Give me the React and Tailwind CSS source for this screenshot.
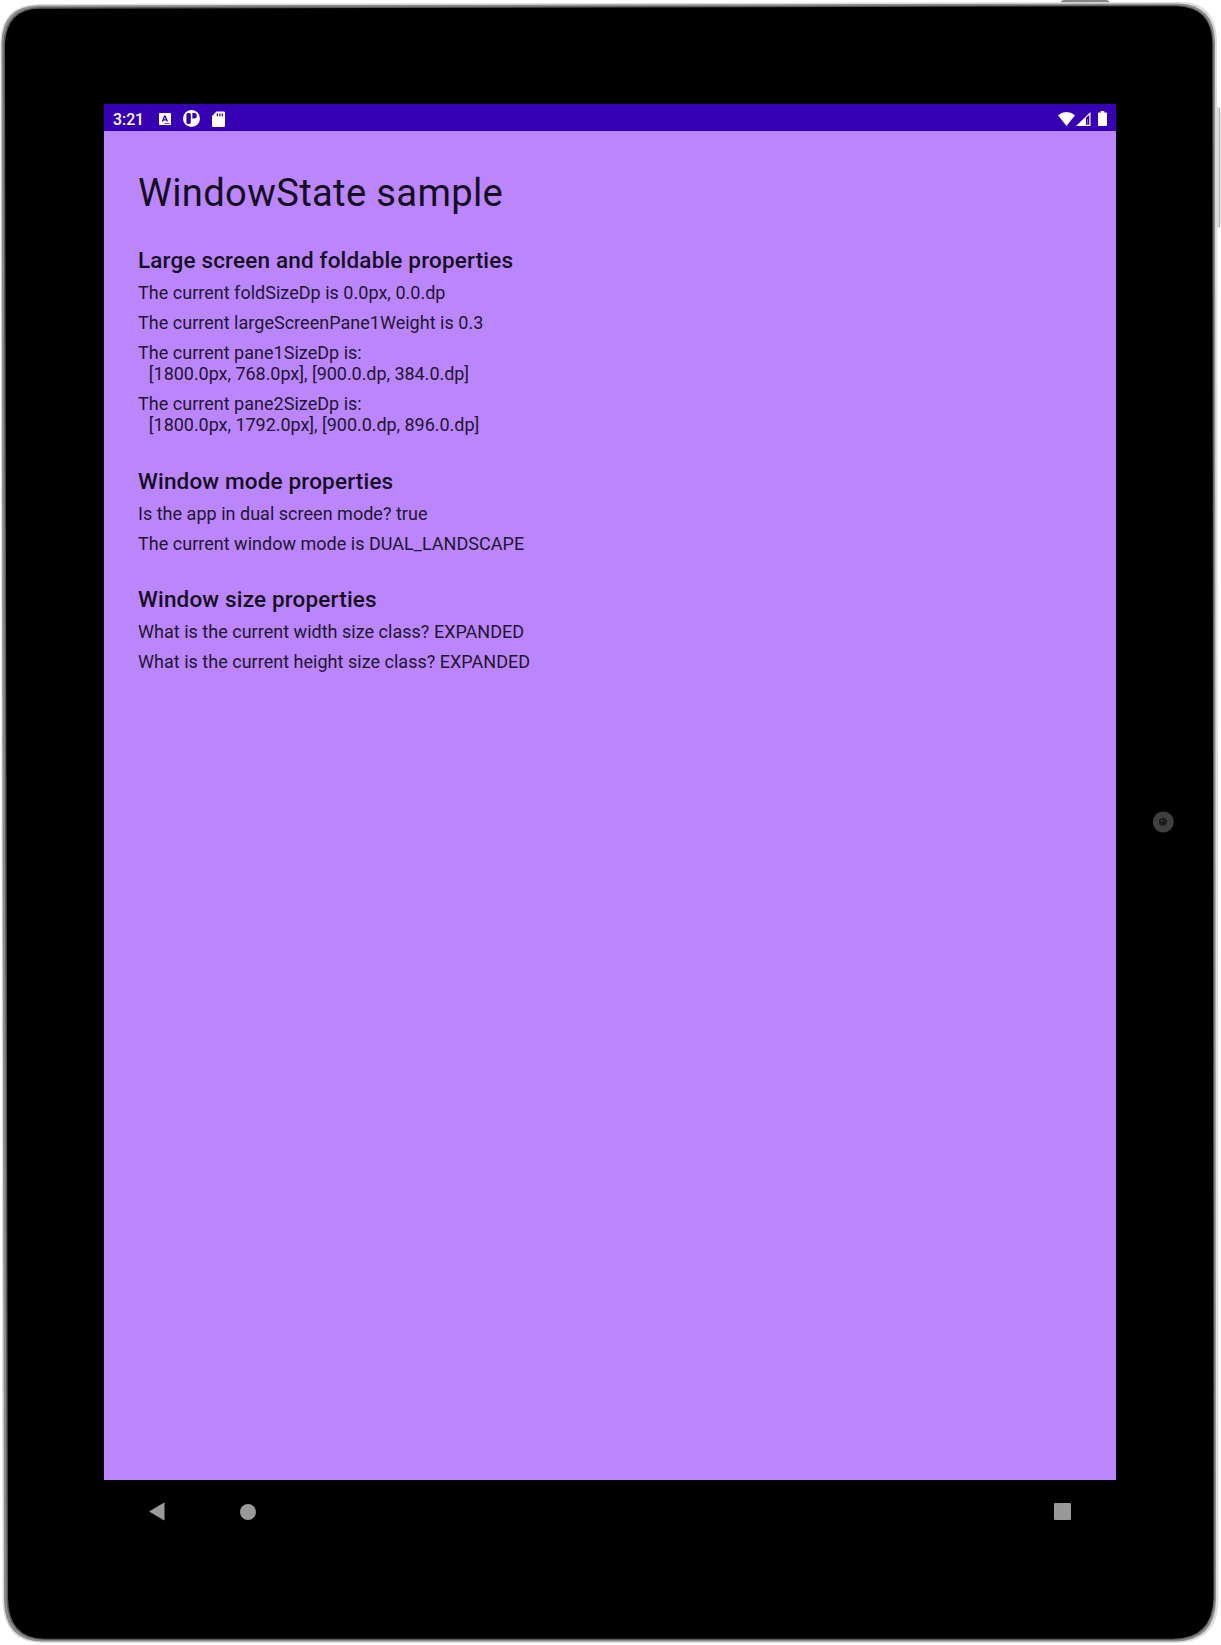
const SECTIONS = [
  {
    title: "Large screen and foldable properties",
    rows: [
      { text: "The current foldSizeDp is 0.0px, 0.0.dp" },
      { text: "The current largeScreenPane1Weight is 0.3" },
      { text: "The current pane1SizeDp is:", detail: "  [1800.0px, 768.0px], [900.0.dp, 384.0.dp]" },
      { text: "The current pane2SizeDp is:", detail: "  [1800.0px, 1792.0px], [900.0.dp, 896.0.dp]" },
    ],
  },
  {
    title: "Window mode properties",
    rows: [
      { text: "Is the app in dual screen mode? true" },
      { text: "The current window mode is DUAL_LANDSCAPE" },
    ],
  },
  {
    title: "Window size properties",
    rows: [
      { text: "What is the current width size class? EXPANDED" },
      { text: "What is the current height size class? EXPANDED" },
    ],
  },
];

/* Metal rim, side buttons and camera of the tablet. */
function TabletBody() {
  return (
    <svg className="absolute inset-0" width="1221" height="1645" viewBox="0 0 1221 1645" fill="none" aria-hidden="true">
      <path d="M1061 3V1.5Q1062 0 1064 0H1106Q1109 0 1110 3Z" fill="#858585" />
      <path d="M1217 107H1219Q1220.5 108 1220.5 110V226Q1220 228 1217 228.500Z" fill="#dcdcdc" />
      <path d="M1219.500 108V227" stroke="#b4b4b4" />
      <path d="M38 4L600 3L1182 2Q1216 3 1217 40L1218 820L1218.500 1600Q1218 1643 1175 1643H42Q3 1643 2.500 1600L1.500 820L.5 42Q1 5 38 4Z" fill="#dedede" />
      <path d="M38 5.500L600 4.500L1178 3.500Q1214.500 4.500 1215 42L1215.500 820L1216 1600Q1215 1641 1175 1641.500H42Q4.500 1641 4 1600L2.500 820L1.500 42Q3 6 38 5.500Z" fill="#8c8c8c" />
      <path d="M40 7.200L600 6.300L1176 5Q1212.500 6 1213.500 43L1214 820L1214.500 1598Q1213 1640 1173 1640H44Q7 1639 6.500 1598L5 820L3.500 44Q5 8 40 7.200Z" fill="#5a5a5a" />
      <path d="M40 8.800L600 7.500L1176 6.200Q1211.500 7 1212.300 43L1213 820L1213.500 1598Q1212 1638.500 1173 1638.800H44Q8.500 1638 8 1598L6.500 820L5 44Q7 9 40 8.800Z" fill="#000" />
      <circle cx="1163.300" cy="822" r="10.500" fill="#3f3f3f" />
      <circle cx="1163" cy="821.800" r="4" fill="#1c1c1c" />
      <circle cx="1161.700" cy="820.700" r=".8" fill="#555" />
    </svg>
  );
}

function StatusBar() {
  return (
    <div className="flex h-[27px] items-center bg-[#3700b3] pt-0.5 pl-[9px] pr-[8px] text-white">
      <span className="w-[46px] translate-y-px text-[15.8px] leading-[18px] font-medium">3:21</span>
      <svg width="12" height="12" viewBox="0 0 12 12" className="mr-[12px] shrink-0">
        <path fill="#fff" fillRule="evenodd" d="M.8 0H11.200Q12 0 12 .8V11.200Q12 12 11.200 12H.8Q0 12 0 11.200V.8Q0 0 .8 0ZM5.200 2.500L2.700 8.500H4.200L4.600 7.400H7.200L7.600 8.500H9.100L6.600 2.500ZM5.900 4.200L6.700 6.300H5.100ZM5.500 10V10.700H10.500V10Z" />
      </svg>
      <svg width="17" height="17" viewBox="0 0 17 17" className="mr-[12px] shrink-0">
        <circle cx="8.500" cy="8.500" r="8.500" fill="#fff" />
        <rect x="3.400" y="2.900" width="4.400" height="11" rx="1.600" fill="#3700b3" />
        <path d="M9.400 3H11.200Q13.800 3.200 13.800 5.800Q13.800 8.400 11.200 8.600H9.400Z" fill="#3700b3" />
      </svg>
      <svg width="13" height="16" viewBox="0 0 13 16" className="shrink-0">
        <path fill="#fff" fillRule="evenodd" d="M4.500 .5H11.700Q13 .5 13 1.800V14.700Q13 16 11.700 16H1.300Q0 16 0 14.700V5ZM4.700 2.500V5.200H6V2.500ZM7.200 2.500V5.200H8.500V2.500ZM9.700 2.500V5.200H11V2.500Z" />
      </svg>
      <div className="ml-auto flex items-center">
        <svg width="17" height="14" viewBox="0 0 17 14" className="mr-[1px]">
          <path d="M0 3.300Q8.500-3.300 17 3.300L8.500 14Z" fill="#fff" />
        </svg>
        <svg width="15" height="14" viewBox="0 0 15 14" className="mr-[7px]">
          <path fillRule="evenodd" d="M0 14L14.500 0V14ZM10 5.800V12.700H13.200V3Z" fill="#fff" />
          <path d="M11.500 7V12" stroke="#fff" strokeOpacity=".35" />
        </svg>
        <svg width="9" height="15" viewBox="0 0 9 15" className="mr-px">
          <path d="M2.700 0H6.300V1.500H8Q9 1.500 9 2.500V14Q9 15 8 15H1Q0 15 0 14V2.500Q0 1.500 1 1.500H2.700Z" fill="#fff" />
        </svg>
      </div>
    </div>
  );
}

function NavigationBar() {
  return (
    <div className="flex h-[63px] items-center bg-black pl-[45px] pr-[45.5px]">
      <svg width="16" height="19" viewBox="0 0 16 19" className="mr-[75px]">
        <path d="M0 9.500L14.800 .8Q15.500 .5 15.500 1.200V17.800Q15.500 18.500 14.800 18.200Z" fill="#999" />
      </svg>
      <div className="size-4 rounded-full bg-[#999]" />
      <div className="ml-auto size-[17px] rounded-[1px] bg-[#999]" />
    </div>
  );
}

export default function App() {
  return (
    <div className="relative h-[1645px] w-[1221px] overflow-hidden bg-white font-['Roboto',sans-serif]">
      <TabletBody />
      <div className="relative pt-[104px] pl-[104px]">
        <div className="w-[1012px]">
          <StatusBar />
          <main className="h-[1349px] bg-[#bb86fc] pt-[40.2px] pl-[34px] text-[#150e1f]">
            <h1 className="mb-[31.1px] text-[38.2px] leading-[44.8px] tracking-[0.32px]">WindowState sample</h1>
            <div className="flex flex-col gap-[32px]">
              {SECTIONS.map((section) => (
                <section key={section.title}>
                  <h2 className="mb-[8.6px] text-[22.5px] leading-[26.4px] font-medium tracking-[0.17px]">{section.title}</h2>
                  <div className="flex flex-col gap-[8.6px] text-[18px] leading-[21.3px] tracking-[0.02px] whitespace-pre text-[#21162f]">
                    {section.rows.map(({ text, detail }) => (
                      <div key={text}>
                        <p>{text}</p>
                        {detail && <p className="pl-[2px] tracking-[-0.04px]">{detail}</p>}
                      </div>
                    ))}
                  </div>
                </section>
              ))}
            </div>
          </main>
          <NavigationBar />
        </div>
      </div>
    </div>
  );
}
